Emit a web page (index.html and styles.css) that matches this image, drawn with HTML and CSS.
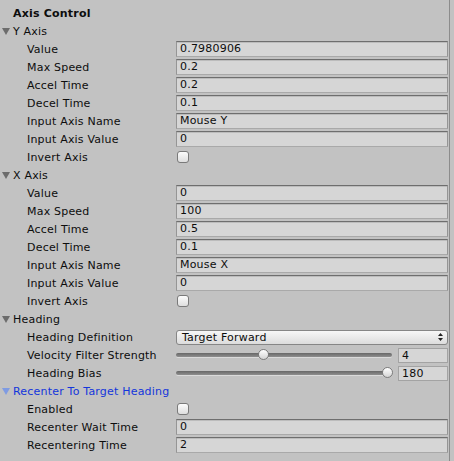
FILE: index.html
```html
<!DOCTYPE html>
<html>
<head>
<meta charset="utf-8">
<link rel="stylesheet" href="styles.css">
</head>
<body>
<div class="panel">
  <div class="title">Axis Control</div>

  <div class="fold"><svg class="tri" width="8" height="8" viewBox="0 0 8 8"><path d="M0 1 H8 L4 8 Z"/></svg><span>Y Axis</span></div>
  <div class="row"><div class="label">Value</div><div class="field">0.7980906</div></div>
  <div class="row"><div class="label">Max Speed</div><div class="field">0.2</div></div>
  <div class="row"><div class="label">Accel Time</div><div class="field">0.2</div></div>
  <div class="row"><div class="label">Decel Time</div><div class="field">0.1</div></div>
  <div class="row"><div class="label">Input Axis Name</div><div class="field">Mouse Y</div></div>
  <div class="row"><div class="label">Input Axis Value</div><div class="field">0</div></div>
  <div class="row"><div class="label">Invert Axis</div><div class="check"></div></div>

  <div class="fold"><svg class="tri" width="8" height="8" viewBox="0 0 8 8"><path d="M0 1 H8 L4 8 Z"/></svg><span>X Axis</span></div>
  <div class="row"><div class="label">Value</div><div class="field">0</div></div>
  <div class="row"><div class="label">Max Speed</div><div class="field">100</div></div>
  <div class="row"><div class="label">Accel Time</div><div class="field">0.5</div></div>
  <div class="row"><div class="label">Decel Time</div><div class="field">0.1</div></div>
  <div class="row"><div class="label">Input Axis Name</div><div class="field">Mouse X</div></div>
  <div class="row"><div class="label">Input Axis Value</div><div class="field">0</div></div>
  <div class="row"><div class="label">Invert Axis</div><div class="check"></div></div>

  <div class="fold"><svg class="tri" width="8" height="8" viewBox="0 0 8 8"><path d="M0 1 H8 L4 8 Z"/></svg><span>Heading</span></div>
  <div class="row"><div class="label">Heading Definition</div>
    <div class="dropdown"><span>Target Forward</span><svg class="updown" width="5" height="8" viewBox="0 0 5 8"><path d="M2.5 0 L5 3 H0 Z M0 5 H5 L2.5 8 Z"/></svg></div>
  </div>
  <div class="row"><div class="label">Velocity Filter Strength</div>
    <div class="slider"><div class="track"><div class="rail"><div class="thumb" style="left: 40%"></div></div></div><div class="field num">4</div></div>
  </div>
  <div class="row"><div class="label">Heading Bias</div>
    <div class="slider"><div class="track"><div class="rail"><div class="thumb" style="left: 100%"></div></div></div><div class="field num">180</div></div>
  </div>

  <div class="fold blue"><svg class="tri" width="8" height="8" viewBox="0 0 8 8"><path d="M0 1 H8 L4 8 Z"/></svg><span>Recenter To Target Heading</span></div>
  <div class="row"><div class="label">Enabled</div><div class="check"></div></div>
  <div class="row"><div class="label">Recenter Wait Time</div><div class="field">0</div></div>
  <div class="row"><div class="label">Recentering Time</div><div class="field">2</div></div>
</div>
</body>
</html>
```
FILE: styles.css
```css
html, body {
  margin: 0;
  padding: 0;
  background: #c2c2c2;
}
body {
  font-family: "DejaVu Sans", Verdana, sans-serif;
  font-size: 11px;
  letter-spacing: 0.2px;
  color: #0d0d0d;
}
.panel {
  width: 450px;
  height: 461px;
  box-sizing: border-box;
  padding: 6px 1px 0 0;
  border-right: 1px solid #8c8c8c;
}
.title {
  height: 16px;
  line-height: 16px;
  padding-left: 13px;
  font-weight: bold;
}
.fold {
  height: 18px;
  display: flex;
  align-items: center;
}
.fold .tri {
  margin: 0 3px 0 2px;
  fill: #6c6c6c;
}
.fold.blue {
  color: #1336dc;
}
.fold.blue .tri {
  fill: #7f9be2;
}
.row {
  height: 18px;
  display: flex;
  align-items: center;
}
.label {
  width: 149px;
  padding-left: 27px;
  flex: none;
  white-space: nowrap;
}
.field {
  flex: 1;
  height: 16px;
  box-sizing: border-box;
  line-height: 14px;
  padding-left: 3px;
  background: #d6d6d6;
  border: 1px solid #959595;
  border-top-color: #6e6e6e;
  border-bottom-color: #a9a9a9;
  box-shadow: inset 0 1px 0 #bcbcbc;
}
.check {
  width: 12px;
  height: 12px;
  box-sizing: border-box;
  margin-left: 1px;
  border: 1px solid #7a7a7a;
  border-radius: 3px;
  background: linear-gradient(#fcfcfc, #dedede);
}
.dropdown {
  flex: 1;
  height: 15px;
  box-sizing: border-box;
  border: 1px solid #868686;
  border-radius: 3px;
  background: linear-gradient(#f7f7f7, #dcdcdc);
  display: flex;
  align-items: center;
  justify-content: space-between;
  padding: 0 4px 0 5px;
  line-height: 13px;
}
.updown {
  fill: #222;
}
.slider {
  flex: 1;
  display: flex;
  align-items: center;
  gap: 6px;
}
.track {
  flex: 1;
  height: 4px;
  position: relative;
  border-radius: 2px;
  background: linear-gradient(#676767, #8e8e8e);
  box-shadow: 0 1px 0 #dadada;
}
.rail {
  position: absolute;
  top: 0;
  bottom: 0;
  left: 5px;
  right: 5px;
}
.thumb {
  position: absolute;
  top: -4px;
  width: 11px;
  height: 11px;
  box-sizing: border-box;
  margin-left: -5px;
  border-radius: 50%;
  border: 1px solid #7c7c7c;
  background: linear-gradient(#ffffff, #d4d4d4);
}
.field.num {
  flex: none;
  width: 50px;
  height: 15px;
  line-height: 13px;
  border-color: #a3a3a3;
  border-top-color: #a3a3a3;
  box-shadow: none;
}
```
